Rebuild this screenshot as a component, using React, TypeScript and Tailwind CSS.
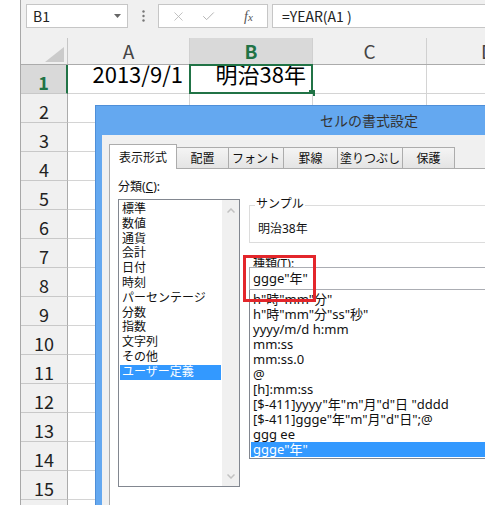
import { Check, X } from 'lucide-react'

const categories = ['標準', '数値', '通貨', '会計', '日付', '時刻', 'パーセンテージ', '分数', '指数', '文字列', 'その他', 'ユーザー定義']

const formats = [
  'h"時"mm"分"',
  'h"時"mm"分"ss"秒"',
  'yyyy/m/d h:mm',
  'mm:ss',
  'mm:ss.0',
  '@',
  '[h]:mm:ss',
  '[$-411]yyyy"年"m"月"d"日 "dddd',
  '[$-411]ggge"年"m"月"d"日";@',
  'ggg ee',
  'ggge"年"',
]

const tabs = [
  { label: '配置', w: 'w-[52px]' },
  { label: 'フォント', w: 'w-[55px]' },
  { label: '罫線', w: 'w-[54px]' },
  { label: '塗りつぶし', w: 'w-[65px]' },
  { label: '保護', w: 'w-[52px]' },
]

// row 16 only peeks in at the bottom edge, its number is below the fold
const rows = Array.from({ length: 16 }, (_, i) => i + 1)

function Toolbar() {
  return (
    <div className="flex h-[38px] shrink-0 items-start bg-[#f0f0f0] pt-[4px] text-[14px] text-[#222]">
      <div className="ml-[5px] flex h-[24px] w-[102px] shrink-0 items-center justify-between border border-[#c6c6c6] bg-white pl-[6px] pr-[6px]">
        <span>B1</span>
        <svg width="7" height="4" viewBox="0 0 7 4">
          <polygon points="0,0 7,0 3.5,4" fill="#666" />
        </svg>
      </div>
      <div className="flex h-[24px] w-[30px] shrink-0 items-center justify-center">
        <svg width="3" height="12" viewBox="0 0 3 12">
          <circle cx="1.5" cy="1.5" r="1.2" fill="#777" />
          <circle cx="1.5" cy="6" r="1.2" fill="#777" />
          <circle cx="1.5" cy="10.5" r="1.2" fill="#777" />
        </svg>
      </div>
      <div className="flex h-[24px] w-[110px] shrink-0 items-center border border-[#c6c6c6] bg-white">
        <X size={15} strokeWidth={1.3} className="ml-[12px] text-[#b4b4b4]" />
        <Check size={15} strokeWidth={1.6} className="ml-[15px] text-[#b4b4b4]" />
        <span className="ml-[28px] font-['Liberation_Serif',serif] text-[14px] italic text-[#555]">
          f<span className="text-[11px]">x</span>
        </span>
      </div>
      <div className="ml-[4px] flex h-[24px] w-[230px] shrink-0 items-center border border-[#c6c6c6] bg-white pl-[9px]">
        =YEAR(A1 )
      </div>
    </div>
  )
}

function ColumnHeader() {
  return (
    <div className="flex h-[27px] shrink-0 border-b border-[#ababab] bg-[#f0f0f0] text-[19px] text-[#444]">
      <div className="flex w-[47px] shrink-0 items-end justify-end border-r border-[#c6c6c6] pb-[2px] pr-[3px]">
        <svg width="19" height="15" viewBox="0 0 19 15">
          <polygon points="19,0 19,15 0,15" fill="#cbcbcb" />
        </svg>
      </div>
      <div className="flex w-[122px] shrink-0 items-center justify-center border-r border-[#d0d0d0]">A</div>
      <div className="flex w-[123px] shrink-0 items-center justify-center border-r border-[#d0d0d0] bg-[#d9d9d9] font-bold text-[#217346]">
        B
      </div>
      <div className="flex w-[114px] shrink-0 items-center justify-center border-r border-[#d0d0d0]">C</div>
      <div className="flex flex-1 items-center pl-[54px]">D</div>
    </div>
  )
}

function SheetRow({ n }: { n: number }) {
  const first = n === 1
  return (
    <div className="flex h-[29px] shrink-0">
      <div
        className={`flex w-[47px] shrink-0 items-end justify-center border-b border-[#c8c8c8] pb-[2px] text-[18px] leading-[18px] ${
          first ? 'border-r-2 border-r-[#217346] bg-[#d9d9d9] font-bold text-[#217346]' : 'border-r border-r-[#ababab] bg-[#f0f0f0] text-[#222]'
        }`}
      >
        {n < 16 ? n : ''}
      </div>
      <div className="flex w-[122px] shrink-0 items-start justify-end border-b border-r border-[#d4d4d4] bg-white pr-[6px] text-[22px] leading-[17px]">
        {first ? '2013/9/1' : ''}
      </div>
      <div className="relative flex w-[123px] shrink-0 items-start justify-end border-b border-r border-[#d4d4d4] bg-white pr-[6px] text-[22px] leading-[17px]">
        {first && (
          <>
            明治38年
            <div className="absolute -inset-[1px] border-2 border-[#217346]">
              <div className="absolute bottom-[-4px] right-[-4px] h-[6px] w-[6px] bg-[#217346]" />
            </div>
          </>
        )}
      </div>
      <div className="w-[114px] shrink-0 border-b border-r border-[#d4d4d4] bg-white" />
      <div className="flex-1 border-b border-[#d4d4d4] bg-white" />
    </div>
  )
}

function CategoryList() {
  return (
    <div className="w-[122px] shrink-0">
      <div className="h-[16px] leading-[16px]">
        分類(<span className="underline">C</span>):
      </div>
      <div className="mt-[4px] flex h-[288px] border border-[#828790] bg-white">
        <div className="w-[103px] shrink-0 pt-[2px]">
          {categories.map((c) => (
            <div
              key={c}
              className={`mx-[1px] h-[14.8px] pl-[2px] leading-[14.8px] ${c === 'ユーザー定義' ? 'bg-[#3399ff] text-white' : ''}`}
            >
              {c}
            </div>
          ))}
        </div>
        <div className="flex w-[17px] shrink-0 flex-col items-center justify-between bg-[#f0f0f0] pb-[7px] pt-[8px]">
          <svg width="8" height="5" viewBox="0 0 8 5">
            <polyline points="0.5,4.5 4,1 7.5,4.5" fill="none" stroke="#c2c2c2" strokeWidth="1.5" />
          </svg>
          <svg width="8" height="5" viewBox="0 0 8 5">
            <polyline points="0.5,0.5 4,4 7.5,0.5" fill="none" stroke="#c2c2c2" strokeWidth="1.5" />
          </svg>
        </div>
      </div>
    </div>
  )
}

function TypePanel() {
  return (
    <div className="w-[300px] shrink-0 pt-[26px]">
      <div className="relative h-[38px] border border-[#dcdcdc] pl-[8px] pt-[15px] leading-[16px]">
        <span className="absolute left-[5px] top-[-10px] bg-white px-[1px] leading-[16px]">サンプル</span>
        明治38年
      </div>
      <div className="mt-[13px] h-[11px] pl-[4px] leading-[16px]">
        種類(<span className="underline">T</span>):
      </div>
      <div className="relative flex h-[23px] items-center border border-[#abadb3] bg-white pl-[3px] text-[13px]">ggge"年"</div>
      <div className="h-[169px] overflow-hidden border-x border-b border-[#828790] bg-white pt-[2px] text-[13px]">
        {formats.map((f) => (
          <div
            key={f}
            className={`mx-[1px] h-[15px] whitespace-pre pl-[2px] leading-[15px] ${f === 'ggge"年"' ? 'bg-[#3399ff] text-white' : 'text-[#111]'}`}
          >
            {f}
          </div>
        ))}
      </div>
    </div>
  )
}

function FormatDialog() {
  return (
    <div className="absolute left-[74px] top-[105px] z-10 flex h-[420px] w-[548px] flex-col border border-[#4f8fd8] bg-[#64a8f0] font-['Noto_Sans','Noto_Sans_CJK_JP',sans-serif] text-[12px] text-[#111]">
      <div className="flex h-[29px] shrink-0 items-center justify-center text-[14px] text-[#333]">セルの書式設定</div>
      <div className="mx-[6px] flex flex-1 flex-col bg-[#f0f0f0] pl-[7px] pt-[9px]">
        <div className="relative z-10 -mb-[1px] flex h-[25px] shrink-0 items-end">
          <div className="flex h-[25px] w-[68px] shrink-0 items-center justify-center border-x border-t border-[#acacac] bg-white pt-[1px]">
            表示形式
          </div>
          {tabs.map((t) => (
            <div
              key={t.label}
              className={`flex h-[22px] shrink-0 items-center justify-center border-b border-r border-t border-[#acacac] bg-linear-to-b from-[#f4f4f4] to-[#e4e4e4] pt-[1px] ${t.w}`}
            >
              {t.label}
            </div>
          ))}
        </div>
        <div className="flex flex-1 gap-[9px] border-l border-t border-[#acacac] bg-white pl-[8px] pt-[10px]">
          <CategoryList />
          <TypePanel />
        </div>
      </div>
    </div>
  )
}

export default function App() {
  return (
    <div className="relative h-[515px] w-[485px] overflow-hidden bg-white font-['Noto_Sans_CJK_JP',sans-serif]">
      <div className="relative ml-[20px] flex h-[505px] w-[465px] flex-col overflow-hidden border-l border-[#a8a8a8]">
        <Toolbar />
        <ColumnHeader />
        {rows.map((n) => (
          <SheetRow key={n} n={n} />
        ))}
        <FormatDialog />
      </div>
      <div className="absolute left-[243px] top-[255px] z-20 h-[47px] w-[73px] border-[3px] border-[#e3262b]" />
    </div>
  )
}
